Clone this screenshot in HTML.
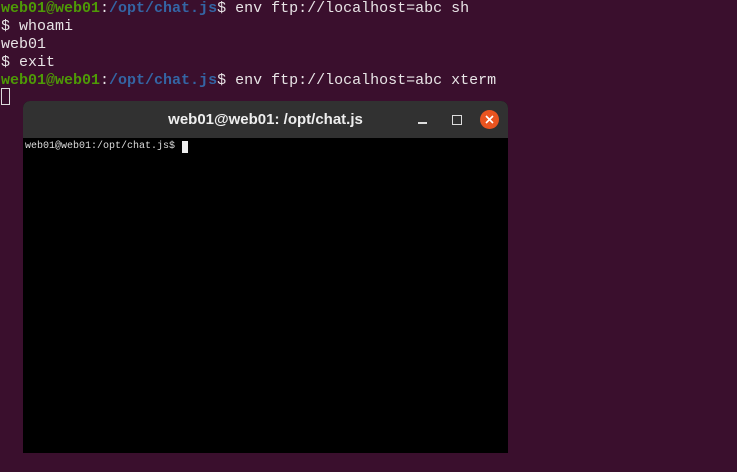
<!DOCTYPE html>
<html><head><style>
html,body{margin:0;padding:0;}
body{width:737px;height:472px;background:#3a0f2d;position:relative;overflow:hidden;font-family:"Liberation Mono",monospace;}
.l{position:absolute;left:1px;font-size:15px;line-height:18px;color:#e8e4e6;white-space:pre;letter-spacing:0px;}
.g{color:#4e9a06;font-weight:bold;}
.b{color:#3465a4;font-weight:bold;}
.cur{position:absolute;left:1px;top:88px;width:9px;height:17px;border:1px solid #ddd;box-sizing:border-box;}
.win{position:absolute;left:23px;top:101px;width:485px;height:352px;background:#000;border-radius:7px 7px 0 0;overflow:hidden;}
.tb{position:absolute;left:0;top:0;width:485px;height:37px;background:#313131;}
.title{position:absolute;left:0;width:485px;top:10px;text-align:center;font-family:"Liberation Sans",sans-serif;font-weight:bold;font-size:15px;color:#eee;}
.min{position:absolute;left:395px;top:21px;width:9px;height:1.5px;background:#ddd;}
.max{position:absolute;left:429px;top:14px;width:8px;height:8px;border:1.5px solid #ddd;}
.cls{position:absolute;left:457px;top:9px;width:19px;height:19px;border-radius:50%;background:#e95420;}
.t2{position:absolute;left:2px;top:40px;font-size:10px;color:#ddd;white-space:pre;}
.c2{position:absolute;left:159px;top:40px;width:6px;height:12px;background:#eee;}
</style></head><body>
<div class="l" style="top:0"><span class="g">web01@web01</span>:<span class="b">/opt/chat.js</span>$ env ftp://localhost=abc sh</div>
<div class="l" style="top:18px">$ whoami</div>
<div class="l" style="top:36px">web01</div>
<div class="l" style="top:54px">$ exit</div>
<div class="l" style="top:72px"><span class="g">web01@web01</span>:<span class="b">/opt/chat.js</span>$ env ftp://localhost=abc xterm</div>
<div class="cur"></div>
<div class="win">
<div class="tb">
<div class="title">web01@web01: /opt/chat.js</div>
<div class="min"></div><div class="max"></div>
<div class="cls"><svg width="19" height="19" viewBox="0 0 19 19"><path d="M6 6L13 13M13 6L6 13" stroke="#fff" stroke-width="1.6"/></svg></div>
</div>
<div class="t2">web01@web01:/opt/chat.js$</div>
<div class="c2"></div>
</div>
</body></html>
